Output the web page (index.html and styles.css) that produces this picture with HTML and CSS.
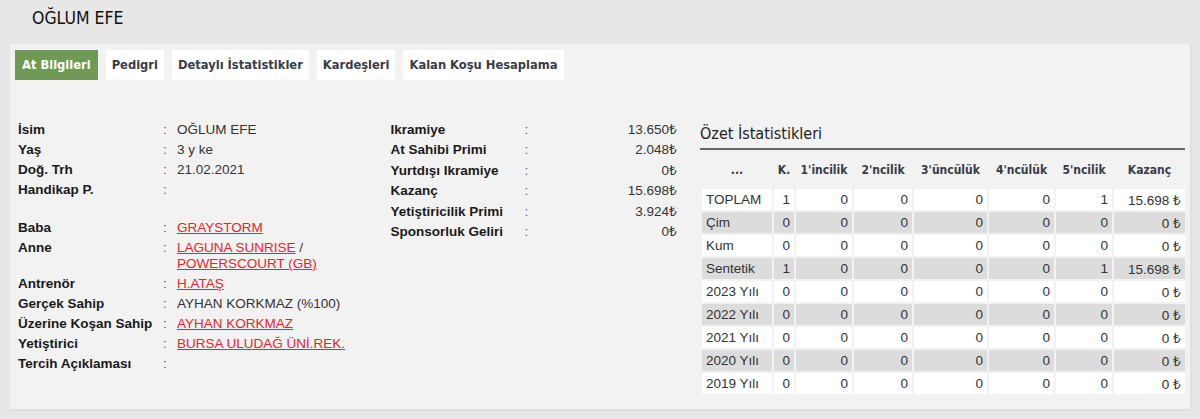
FILE: index.html
```html
<!DOCTYPE html>
<html lang="tr">
<head>
  <meta charset="UTF-8">
  <meta name="viewport" content="width=device-width, initial-scale=1.0">
  <title>OĞLUM EFE</title>
  <link rel="stylesheet" href="styles.css">
</head>
<body>

  <h1 class="horse-title">OĞLUM EFE</h1>

  <div class="panel">
    <ul class="tabs">
      <li class="tab active">At Bilgileri</li>
      <li class="tab">Pedigri</li>
      <li class="tab">Detaylı İstatistikler</li>
      <li class="tab">Kardeşleri</li>
      <li class="tab">Kalan Koşu Hesaplama</li>
    </ul>

    <div class="info">
      <table class="info-table">
        <tbody>
          <tr><th>İsim</th><td class="colon">:</td><td>OĞLUM EFE</td></tr>
          <tr><th>Yaş</th><td class="colon">:</td><td>3 y ke</td></tr>
          <tr><th>Doğ. Trh</th><td class="colon">:</td><td>21.02.2021</td></tr>
          <tr><th>Handikap P.</th><td class="colon">:</td><td></td></tr>
          <tr class="spacer"><td colspan="3"></td></tr>
          <tr><th>Baba</th><td class="colon">:</td><td><a href="#">GRAYSTORM</a></td></tr>
          <tr><th>Anne</th><td class="colon">:</td><td><a href="#">LAGUNA SUNRISE</a> /<br><a href="#">POWERSCOURT (GB)</a></td></tr>
          <tr><th>Antrenör</th><td class="colon">:</td><td><a href="#">H.ATAŞ</a></td></tr>
          <tr><th>Gerçek Sahip</th><td class="colon">:</td><td>AYHAN KORKMAZ (%100)</td></tr>
          <tr><th>Üzerine Koşan Sahip</th><td class="colon">:</td><td><a href="#">AYHAN KORKMAZ</a></td></tr>
          <tr><th>Yetiştirici</th><td class="colon">:</td><td><a href="#">BURSA ULUDAĞ ÜNİ.REK.</a></td></tr>
          <tr><th>Tercih Açıklaması</th><td class="colon">:</td><td></td></tr>
        </tbody>
      </table>

      <table class="money-table">
        <tbody>
          <tr><th>Ikramiye</th><td class="colon">:</td><td class="num">13.650₺</td></tr>
          <tr><th>At Sahibi Primi</th><td class="colon">:</td><td class="num">2.048₺</td></tr>
          <tr><th>Yurtdışı Ikramiye</th><td class="colon">:</td><td class="num">0₺</td></tr>
          <tr><th>Kazanç</th><td class="colon">:</td><td class="num">15.698₺</td></tr>
          <tr><th>Yetiştiricilik Primi</th><td class="colon">:</td><td class="num">3.924₺</td></tr>
          <tr><th>Sponsorluk Geliri</th><td class="colon">:</td><td class="num">0₺</td></tr>
        </tbody>
      </table>

      <div class="summary">
        <h3>Özet İstatistikleri</h3>
        <table class="stats">
          <colgroup>
            <col class="c-name"><col class="c-k"><col class="c-1"><col class="c-2">
            <col class="c-3"><col class="c-4"><col class="c-5"><col class="c-money">
          </colgroup>
          <thead>
            <tr>
              <th class="dots">...</th>
              <th>K.</th>
              <th>1'incilik</th>
              <th>2'ncilik</th>
              <th>3'üncülük</th>
              <th>4'ncülük</th>
              <th>5'ncilik</th>
              <th>Kazanç</th>
            </tr>
          </thead>
          <tbody>
            <tr><td>TOPLAM</td><td>1</td><td>0</td><td>0</td><td>0</td><td>0</td><td>1</td><td>15.698 ₺</td></tr>
            <tr><td>Çim</td><td>0</td><td>0</td><td>0</td><td>0</td><td>0</td><td>0</td><td>0 ₺</td></tr>
            <tr><td>Kum</td><td>0</td><td>0</td><td>0</td><td>0</td><td>0</td><td>0</td><td>0 ₺</td></tr>
            <tr><td>Sentetik</td><td>1</td><td>0</td><td>0</td><td>0</td><td>0</td><td>1</td><td>15.698 ₺</td></tr>
            <tr><td>2023 Yılı</td><td>0</td><td>0</td><td>0</td><td>0</td><td>0</td><td>0</td><td>0 ₺</td></tr>
            <tr><td>2022 Yılı</td><td>0</td><td>0</td><td>0</td><td>0</td><td>0</td><td>0</td><td>0 ₺</td></tr>
            <tr><td>2021 Yılı</td><td>0</td><td>0</td><td>0</td><td>0</td><td>0</td><td>0</td><td>0 ₺</td></tr>
            <tr><td>2020 Yılı</td><td>0</td><td>0</td><td>0</td><td>0</td><td>0</td><td>0</td><td>0 ₺</td></tr>
            <tr><td>2019 Yılı</td><td>0</td><td>0</td><td>0</td><td>0</td><td>0</td><td>0</td><td>0 ₺</td></tr>
          </tbody>
        </table>
      </div>
    </div>
  </div>

</body>
</html>
```

FILE: styles.css
```css
body {
  font-family: "Liberation Sans", Arial, sans-serif;
  font-size: 13.5px;
  color: #333;
  background-color: #e7e7e7;
  margin: 0;
  padding: 0 8px 0 10px;
}
.horse-title {
  font-family: "DejaVu Sans Condensed", sans-serif;
  font-weight: normal;
  font-size: 17.5px;
  line-height: 26px;
  color: #111;
  margin: 0;
  padding: 5px 0 13px 22px;
}
.panel {
  background-color: #f2f2f2;
  border-right: 2px solid #e0e0e0;
  border-bottom: 2px solid #e0e0e0;
  padding: 6px 5px 8px;
  height: 351px;
}
.tabs {
  list-style: none;
  margin: 0;
  padding: 0;
  display: flex;
  gap: 8px;
}
.tab {
  font-family: "DejaVu Sans Condensed", sans-serif;
  font-weight: bold;
  font-size: 12.8px;
  line-height: 30px;
  padding: 0 6px;
  background-color: #fff;
  color: #383c46;
}
.tab.active {
  padding: 0 7px;
  background-color: #6e9a56;
  color: #fff;
}
.info {
  display: flex;
  align-items: flex-start;
  margin-top: 40px;
}
.info table {
  border-collapse: collapse;
}
.info-table {
  width: 373px;
  margin-left: 3px;
}
.info-table th,
.money-table th {
  text-align: left;
  font-weight: bold;
  color: #1a1a1a;
  padding: 2px 0;
  line-height: 16px;
  vertical-align: top;
  white-space: nowrap;
}
.info-table td,
.money-table td {
  padding: 2px 0;
  line-height: 16px;
  vertical-align: top;
}
.info-table th {
  width: 145px;
}
.colon {
  width: 14px;
  color: #555;
}
.info-table .spacer td {
  height: 14px;
}
.info a {
  color: #e4262b;
}
.money-table {
  width: 287px;
}
.money-table th {
  width: 134px;
  line-height: 16.4px;
}
.money-table td {
  line-height: 16.4px;
}
.num {
  text-align: right;
}
.summary {
  margin-left: 23px;
  width: 485px;
}
.summary h3 {
  font-family: "DejaVu Sans Condensed", sans-serif;
  font-weight: normal;
  font-size: 16px;
  line-height: 22px;
  color: #222;
  margin: 3px 0 0;
  padding-bottom: 3px;
  border-bottom: 2px solid #666;
}
.summary table.stats {
  width: 485px;
  border-collapse: separate;
  border-spacing: 2px;
  table-layout: fixed;
}
.c-name { width: 70px; }
.c-k { width: 20px; }
.c-1 { width: 56px; }
.c-2 { width: 58px; }
.c-3 { width: 73px; }
.c-4 { width: 65px; }
.c-5 { width: 56px; }
.c-money { width: 71px; }
.stats th {
  font-family: "DejaVu Sans Condensed", sans-serif;
  font-weight: bold;
  font-size: 12px;
  color: #383c46;
  height: 35px;
  padding: 0;
  text-align: center;
  white-space: nowrap;
}
.stats td {
  font-size: 13.5px;
  background-color: #fff;
  height: 21px;
  padding: 0 4px;
  text-align: right;
  white-space: nowrap;
}
.stats td:first-child {
  text-align: left;
}
.stats tbody tr:nth-child(even) td {
  background-color: #dcdcdc;
}
```
